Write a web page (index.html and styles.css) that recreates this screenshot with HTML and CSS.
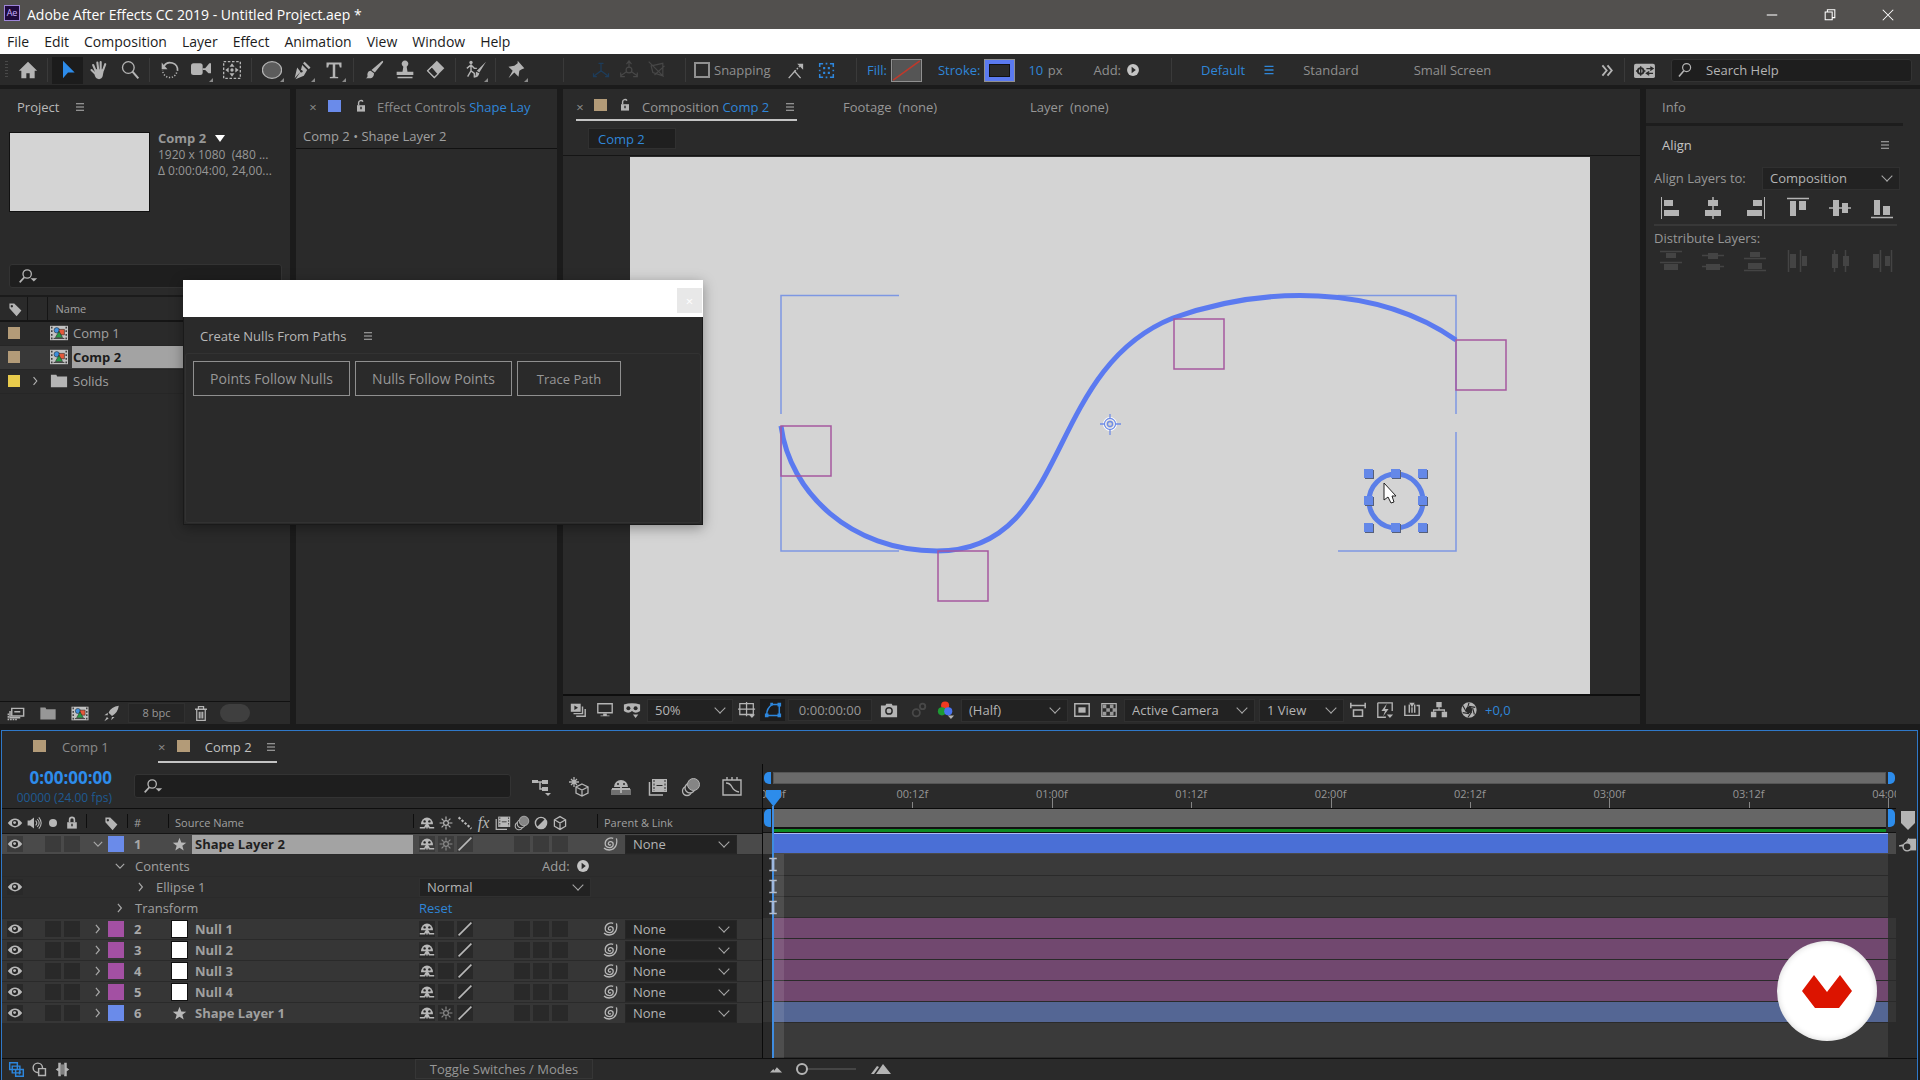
FILE: index.html
```html
<!DOCTYPE html>
<html lang="en">
<head>
<meta charset="utf-8">
<title>Adobe After Effects CC 2019 - Untitled Project.aep *</title>
<link rel="stylesheet" href="styles.css">
</head>
<body>
<svg class="defs" aria-hidden="true">
  <symbol id="menu" viewBox="0 0 20 20"><path d="M5 6h10M5 10h10M5 14h10" stroke="currentColor" stroke-width="1.4"/></symbol>
  <symbol id="lock-open" viewBox="0 0 20 20"><path d="M5 9h10v8H5z" fill="currentColor"/><path d="M7 9V6a3 3 0 0 1 5.500-1.500" fill="none" stroke="currentColor" stroke-width="1.800"/><path d="M10 11v3" stroke="#2a2a2a" stroke-width="1.800"/></symbol>
  <symbol id="lock" viewBox="0 0 20 20"><path d="M4 9h12v8H4z" fill="currentColor"/><path d="M7 9V6a3 3 0 0 1 6 0v3" fill="none" stroke="currentColor" stroke-width="2"/><path d="M10 11v3" stroke="#2a2a2a" stroke-width="1.800"/></symbol>
  <symbol id="search" viewBox="0 0 20 20"><circle cx="12" cy="7" r="5" fill="none" stroke="currentColor" stroke-width="1.500"/><path d="M8.500 11 2.500 18" stroke="currentColor" stroke-width="2"/></symbol>
  <symbol id="search-drop" viewBox="0 0 24 20"><circle cx="11" cy="7" r="5" fill="none" stroke="currentColor" stroke-width="1.600"/><path d="M7.500 11 2 17" stroke="currentColor" stroke-width="2"/><path d="M15 12h8l-4 4z" fill="currentColor"/></symbol>
  <symbol id="tag" viewBox="0 0 20 20"><path fill-rule="evenodd" d="M3 3h6l9 9-6 7-9-10zM6 5a1.500 1.500 0 1 0 .1 0z" fill="currentColor"/></symbol>
  <symbol id="folder" viewBox="0 0 20 20"><path d="M1 3h6l1 2h11v12H1z" fill="currentColor"/></symbol>
  <symbol id="comp" viewBox="0 0 20 20"><path d="M0 2h20v16H0z" fill="#c2c2c2"/><path d="M2 3v14M18 3v14" stroke="#2b2b2b" stroke-width="1.500" stroke-dasharray="2 2"/><path d="M4 16h12" stroke="#2b2b2b"/><circle cx="7.500" cy="7" r="3" fill="#3f8fdc" stroke="#222" stroke-width=".6"/><path d="M10 6h6v6h-6z" fill="#e5593b" stroke="#222" stroke-width=".6"/><path d="M10 8l4 7H6z" fill="#279a45" stroke="#222" stroke-width=".6"/></symbol>
  <symbol id="eye" viewBox="0 0 20 20"><path d="M1 10q9-11 18 0q-9 11-18 0z" fill="currentColor"/><circle cx="10" cy="10" r="3.800" fill="#242424"/><circle cx="9.500" cy="9.500" r="1.800" fill="currentColor"/></symbol>
  <symbol id="speaker" viewBox="0 0 20 20"><path d="M2 7h3l5-4v14l-5-4H2z" fill="currentColor"/><path d="M12 7q3 3 0 6M14 5q5 5 0 10M16 3q6 7 0 14" fill="none" stroke="currentColor" stroke-width="1.300"/></symbol>
  <symbol id="dot" viewBox="0 0 20 20"><circle cx="10" cy="10" r="5" fill="currentColor"/></symbol>
  <symbol id="twirl" viewBox="0 0 20 20"><path d="M7 4l5 6-5 6" fill="none" stroke="currentColor" stroke-width="1.700"/></symbol>
  <symbol id="twirl-down" viewBox="0 0 20 20"><path d="M4 7l6 6 6-6" fill="none" stroke="currentColor" stroke-width="1.700"/></symbol>
  <symbol id="star" viewBox="0 0 20 20"><path d="M10 1l2.400 6.200 6.600.3-5.200 4.100 1.800 6.400-5.600-3.600L4.400 18l1.800-6.400L1 7.500l6.600-.3z" fill="currentColor"/></symbol>
  <symbol id="shy" viewBox="0 0 20 20"><path d="M2.500 11.500a7.500 8.500 0 0 1 15 0z" fill="currentColor"/><circle cx="7" cy="8" r="1.500" fill="#242424"/><circle cx="13" cy="8" r="1.500" fill="#242424"/><path d="M10 11v6M1 16h6l2-4M19 16h-6l-2-4" fill="none" stroke="currentColor" stroke-width="2"/></symbol>
  <symbol id="sun" viewBox="0 0 20 20"><circle cx="10" cy="10" r="3" fill="none" stroke="currentColor" stroke-width="1.500"/><path d="M10 2v4M10 14v4M2 10h4M14 10h4M4.500 4.500 7 7M13 13l2.500 2.500M4.500 15.500 7 13M13 7l2.500-2.500" stroke="currentColor" stroke-width="1.400"/></symbol>
  <symbol id="quality" viewBox="0 0 20 20"><path d="M2 18 18 2" stroke="currentColor" stroke-width="2"/></symbol>
  <symbol id="quality-head" viewBox="0 0 20 20"><path d="M2 3 18 17" stroke="currentColor" stroke-width="2.600" stroke-dasharray="3 2"/></symbol>
  <symbol id="film" viewBox="0 0 20 20"><path d="M4 2h15v13H4z" fill="currentColor"/><path d="M1.500 5v13H15" fill="none" stroke="currentColor" stroke-width="1.500"/><path d="M6 3v11M17 3v11" stroke="#2a2a2a" stroke-dasharray="2 1.500"/><path d="M8.500 8.500h6" stroke="#2a2a2a"/></symbol>
  <symbol id="blur" viewBox="0 0 20 20"><circle cx="6" cy="14" r="4.500" fill="none" stroke="currentColor" stroke-width="1.300"/><circle cx="9" cy="11" r="5" fill="#2a2a2a" stroke="currentColor" stroke-width="1.300"/><circle cx="12.500" cy="7.500" r="6" fill="#858585" stroke="currentColor"/></symbol>
  <symbol id="adjust" viewBox="0 0 20 20"><circle cx="10" cy="10" r="7" fill="none" stroke="currentColor" stroke-width="1.800"/><path d="M15 5A7 7 0 0 1 5 15z" fill="currentColor"/></symbol>
  <symbol id="cube" viewBox="0 0 20 20"><path d="M10 2l7 4v8l-7 4-7-4V6zM3 6l7 4 7-4M10 10v8" fill="none" stroke="currentColor" stroke-width="1.600"/></symbol>
  <symbol id="spiral" viewBox="0 0 20 20"><path d="M11 10.500c-1 1.500-3.500.5-3-1.500.7-3 6-2.500 6 1.500 0 5.500-10 5.500-10-1C4 3 11 1.500 14 3M18 3c1.500 6-.5 14-9 14.500-3 0-5-1-6.500-2.500" fill="none" stroke="currentColor" stroke-width="1.600"/></symbol>
  <symbol id="play" viewBox="0 0 20 20"><circle cx="10" cy="10" r="8.500" fill="currentColor"/><path d="M8 5.500l6 4.500-6 4.500z" fill="#2a2a2a"/></symbol>
  <symbol id="ibeam" viewBox="0 0 10 16"><path d="M1 1.500h8M1 14.500h8" stroke="#b9c0cc" stroke-width="1.600"/><path d="M5 2v12" stroke="#9db8e0" stroke-width="3"/></symbol>
</svg>

<header class="titlebar">
  <span class="app-logo">Ae</span>
  <span class="app-title">Adobe After Effects CC 2019 - Untitled Project.aep *</span>
  <div class="window-buttons">
    <button aria-label="Minimize"><svg viewBox="0 0 16 16"><path d="M2 8h12" stroke="#fff" stroke-width="1.200"/></svg></button>
    <button aria-label="Restore"><svg viewBox="0 0 16 16"><path d="M2.500 4.500h8v9h-8zM5 4V2h8.500v9H11" fill="none" stroke="#fff" stroke-width="1.200"/></svg></button>
    <button aria-label="Close"><svg viewBox="0 0 16 16"><path d="M2 2l12 12M14 2 2 14" stroke="#fff" stroke-width="1.200"/></svg></button>
  </div>
</header>

<nav class="menubar">
  <button>File</button><button>Edit</button><button>Composition</button><button>Layer</button><button>Effect</button><button>Animation</button><button>View</button><button>Window</button><button>Help</button>
</nav>

<div class="toolbar">
  <span class="grip"></span>
  <button class="tool" aria-label="Home"><svg viewBox="0 0 24 24"><path d="M12 2 1 13h3v9h6v-6h4v6h6v-9h3z" fill="currentColor"/></svg></button>
  <span class="sep"></span>
  <button class="tool active" aria-label="Selection"><svg viewBox="0 0 24 24"><path d="M6 1l14 14h-8l-6 7z" fill="currentColor"/></svg></button>
  <button class="tool" aria-label="Hand"><svg viewBox="0 0 24 24"><path d="M8 13 5 6M11 11 10 3M14 11V2.500M17 12l2.500-7M9 18l-6-6" stroke="currentColor" stroke-width="2.500" stroke-linecap="round"/><path d="M7 11h11l-1.500 8q-1 4-4.500 4t-5-4z" fill="currentColor"/></svg></button>
  <button class="tool" aria-label="Zoom"><svg viewBox="0 0 24 24"><circle cx="10" cy="9" r="7" fill="none" stroke="currentColor" stroke-width="1.600"/><path d="M15 14l7 8" stroke="currentColor" stroke-width="2.500"/></svg></button>
  <span class="sep"></span>
  <button class="tool" aria-label="Rotation"><svg viewBox="0 0 24 24"><path d="M5 7c4-7 17-4 16 6" fill="none" stroke="currentColor" stroke-width="2"/><path d="M20 15c-3 9-16 8-17-3" fill="none" stroke="currentColor" stroke-width="1.800" stroke-dasharray="1.500 2"/><path d="M2 3v8h7z" fill="currentColor"/></svg></button>
  <button class="tool more" aria-label="Camera"><svg viewBox="0 0 24 24"><rect x="0" y="4" width="14" height="14" rx="3" fill="currentColor"/><path d="M14 10h3l5-6h2v12h-3l-4-4h-3z" fill="currentColor"/></svg></button>
  <button class="tool" aria-label="Pan Behind"><svg viewBox="0 0 24 24"><path d="M2 2h20v20H2z" fill="none" stroke="currentColor" stroke-width="1.600" stroke-dasharray="3 2"/><path d="M12 4l3 4H9zM12 20l3-4H9zM4 12l4-3v6zM20 12l-4-3v6z" fill="currentColor"/><circle cx="12" cy="12" r="2" fill="currentColor"/></svg></button>
  <span class="sep"></span>
  <button class="tool more" aria-label="Ellipse"><svg viewBox="0 0 24 24"><ellipse cx="12" cy="12" rx="11.500" ry="10" fill="#5c5c5c" stroke="currentColor" stroke-width="1.500"/></svg></button>
  <button class="tool more" aria-label="Pen"><svg viewBox="0 0 24 24"><path d="M14 2l7 7-2 2-7-7zM11 6l6 6-4 7-10 4 6-9M9 14l-7 8 3-13z" fill="currentColor"/><circle cx="10" cy="13.500" r="1.500" fill="#2a2a2a"/></svg></button>
  <button class="tool more" aria-label="Type"><svg viewBox="0 0 24 24"><path d="M3 3h18v6h-2l-1-3.500h-4.500V20l3.500.5V22H7v-1.500l3.500-.5V5.500H6L5 9H3z" fill="currentColor"/></svg></button>
  <span class="sep"></span>
  <button class="tool" aria-label="Brush"><svg viewBox="0 0 24 24"><path d="M22 1q2 1 0 3l-9 11-4-3zM8 13l4 3q0 5-4 6H2q3-1 2-5 1-4 4-4z" fill="currentColor"/></svg></button>
  <button class="tool" aria-label="Clone Stamp"><svg viewBox="0 0 24 24"><path d="M10 8a4 4 0 1 1 4 0l1 6h7v4H2v-4h7zM3 20h18v2H3z" fill="currentColor"/></svg></button>
  <button class="tool" aria-label="Eraser"><svg viewBox="0 0 24 24"><path d="M13 1l9 9-12 12-9-9z" fill="currentColor"/><path d="M7 9l7 8-4 4-8-8z" fill="#2a2a2a"/><path d="M7 8 2 13l8 8 5-5" fill="none" stroke="currentColor" stroke-width="1.500"/></svg></button>
  <span class="sep"></span>
  <button class="tool more" aria-label="Roto Brush"><svg viewBox="0 0 24 24"><circle cx="6" cy="3" r="2" fill="currentColor"/><path d="M1 10l5-4 4 4h3M6 6v7l-4 7M6 13l4 3v5" fill="none" stroke="currentColor" stroke-width="1.700"/><path d="M24 2l-8 13-3-2zM12 14l4 2q-1 5-6 5 2-2 2-7z" fill="currentColor"/></svg></button>
  <span class="sep"></span>
  <button class="tool more" aria-label="Puppet Pin"><svg viewBox="0 0 24 24"><path d="M14 1l8 9-3 1-3 2-1 7-5-5-7 7 5-9-5-5 7-1 4-3z" fill="currentColor"/></svg></button>
  <span class="sep sep-wide"></span>
  <button class="axis" aria-label="Local Axis Mode" disabled><svg viewBox="0 0 24 24"><path d="M12 4v9l-8 6M12 13l8 6M9 4h6M3 16v4h4M21 16v4h-4" fill="none" stroke="#1d3c5a" stroke-width="1.500"/></svg></button>
  <button class="axis" aria-label="World Axis Mode" disabled><svg viewBox="0 0 24 24"><circle cx="12" cy="12" r="3.500" fill="none" stroke="#474747" stroke-width="1.400"/><path d="M12 9V2M9 14l-7 5M15 14l7 5M9 5l3-4 3 4M2 15v5h5M22 15v5h-5" fill="none" stroke="#474747" stroke-width="1.400"/></svg></button>
  <button class="axis" aria-label="View Axis Mode" disabled><svg viewBox="0 0 24 24"><path d="M5 7l14-3v15L7 15zM2 2l18 18M9 18l12-11" fill="none" stroke="#474747" stroke-width="1.400"/></svg></button>
  <span class="sep sep-snap"></span>
  <label class="snapping"><input type="checkbox">Snapping</label>
  <button class="mini" aria-label="Snap to edges"><svg viewBox="0 0 20 20"><path d="M2 19l7-8 7 8" fill="none" stroke="#b4b4b4" stroke-width="1.600"/><path d="M9 11l6-6" stroke="#b4b4b4" stroke-width="1.600" stroke-dasharray="2 1.500"/><path d="M12 2h7v7z" fill="#b4b4b4"/></svg></button>
  <button class="mini" aria-label="Snap to features"><svg viewBox="0 0 20 20"><path d="M2 6V2h4M14 2h4v4M18 14v4h-4M6 18H2v-4" fill="none" stroke="#2d86dc" stroke-width="1.800"/><path d="M6 6h2.500v2.500H6zM11.500 6H14v2.500h-2.500zM6 11.500h2.500V14H6zM11.500 11.500H14V14h-2.500zM9 1h2v2H9zM9 17h2v2H9zM1 9h2v2H1zM17 9h2v2h-2z" fill="#2d86dc"/></svg></button>
  <span class="sep sep-fill"></span>
  <button class="blue">Fill:</button>
  <button class="swatch" aria-label="Fill colour"><svg viewBox="0 0 30 22"><path d="M0 0h30v22H0z" fill="#555"/><path d="M1 21 29 1" stroke="#c0392b" stroke-width="1.600"/></svg></button>
  <button class="blue stroke-label">Stroke:</button>
  <button class="swatch swatch-stroke" aria-label="Stroke colour"><span></span></button>
  <span class="stroke-width"><span class="blue">10</span> px</span>
  <button class="add">Add:<svg><use href="#play"/></svg></button>
  <span class="sep sep-ws"></span>
  <div class="workspaces">
    <button class="blue">Default</button><svg class="blue"><use href="#menu"/></svg>
    <button>Standard</button><button class="ws-small">Small Screen</button>
  </div>
  <button class="mini ws-more" aria-label="More workspaces"><svg viewBox="0 0 20 20"><path d="M4 4l5 6-5 6M10 4l5 6-5 6" fill="none" stroke="#b4b4b4" stroke-width="2.200"/></svg></button>
  <span class="sep"></span>
  <button class="mini sync" aria-label="Sync settings"><svg viewBox="0 0 24 20"><rect x="1" y="3" width="22" height="15" rx="2" fill="#b4b4b4"/><circle cx="8" cy="10.500" r="3" fill="none" stroke="#2a2a2a" stroke-width="2"/><path d="M8 5.500v10M3 10.500h2M11 10.500h2M14 8h6M15 13h6M18 6l3 2-3 2M17 11l-3 2 3 2" fill="none" stroke="#2a2a2a" stroke-width="1.400"/></svg></button>
  <label class="help-search"><svg><use href="#search"/></svg><input type="text" placeholder="Search Help" aria-label="Search Help"></label>
</div>

<main class="workspace">
  <section class="panel project">
    <div class="tabs"><span class="light">Project</span><svg class="ic"><use href="#menu"/></svg></div>
    <div class="item-info">
      <div class="thumb"></div>
      <div class="item-text"><strong>Comp 2 <i class="tri"></i></strong><span>1920 x 1080&nbsp; (480 ...</span><span>Δ 0:00:04:00, 24,00...</span></div>
    </div>
    <label class="searchbox"><svg><use href="#search-drop"/></svg><input type="text" aria-label="Search project"></label>
    <table class="items">
      <thead><tr><th class="c-label"><svg class="ic"><use href="#tag"/></svg></th><th class="c-gap"></th><th class="c-item">Name</th></tr></thead>
      <tbody>
        <tr><td><i class="chip sand"></i></td><td></td><td><span class="item"><svg><use href="#comp"/></svg><span>Comp 1</span></span></td></tr>
        <tr class="selected"><td><i class="chip sand"></i></td><td></td><td><span class="item"><svg><use href="#comp"/></svg><span>Comp 2</span></span></td></tr>
        <tr><td><i class="chip yellow"></i></td><td><svg class="ic tw"><use href="#twirl"/></svg></td><td><span class="item"><svg><use href="#folder"/></svg><span>Solids</span></span></td></tr>
      </tbody>
    </table>
    <footer class="project-foot">
      <button aria-label="Interpret Footage"><svg viewBox="0 0 20 20"><path d="M5 4h14v9H5z" fill="none" stroke="#b4b4b4" stroke-width="1.700"/><path d="M8 8h7M3 7v8h12" stroke="#b4b4b4" stroke-width="1.800" fill="none"/><path d="M1 10v7h11" fill="none" stroke="#b4b4b4" stroke-width="1.800" stroke-dasharray="2 1"/></svg></button>
      <button aria-label="New Folder"><svg><use href="#folder"/></svg></button>
      <button aria-label="New Composition"><svg><use href="#comp"/></svg></button>
      <button aria-label="Project Settings"><svg viewBox="0 0 20 20"><path d="M18 1Q9 2 6 9l4 4q7-4 8-12zM5 9l-4 3h4zM10 14l-1 4 4-4zM4 14l-3 5 5-3z" fill="#b4b4b4"/></svg></button>
      <button class="bpc">8 bpc</button>
      <button aria-label="Delete"><svg viewBox="0 0 20 20"><path d="M3 5h14M7 5V2h6v3M5 5v13h10V5M8 8v8M10 8v8M12 8v8" fill="none" stroke="#b4b4b4" stroke-width="1.500"/></svg></button>
      <span class="pill"></span>
    </footer>
  </section>

  <section class="panel effects">
    <div class="tabs"><button class="x">×</button><i class="chip blue-chip"></i><svg class="ic"><use href="#lock-open"/></svg><span class="fx-title">Effect Controls <span class="blue">Shape Lay</span></span></div>
    <p class="fx-path">Comp 2 • Shape Layer 2</p>
  </section>

  <section class="panel comp">
    <div class="tabs comp-tabs">
      <div class="tab current"><button class="x">×</button><i class="chip sand"></i><svg class="ic"><use href="#lock-open"/></svg><span>Composition <span class="blue">Comp 2</span></span><svg class="ic end"><use href="#menu"/></svg></div>
      <button class="tab-footage">Footage&nbsp; (none)</button><button class="tab-layer">Layer&nbsp; (none)</button>
    </div>
    <div class="crumbs"><button class="blue">Comp 2</button></div>
    <div class="viewer">
      <svg class="canvas" viewBox="0 0 960 537">
        <g fill="none" stroke="#7d97e2" stroke-width="1.500">
          <path d="M151 257V138.500H269M151 275V394H269M708 138.500H826V257M708 394H826V275"/>
        </g>
        <path d="M151 269C160 336 221 394 307 394C441 394 413 213 543 161C633 129 746 127 826 183" fill="none" stroke="#5b7af0" stroke-width="5"/>
        <g fill="none" stroke="#a5589f" stroke-width="1.500"><path d="M151 269h50v50h-50zM308 394h50v50h-50zM544 162h50v50h-50zM826 183h50v50h-50z"/></g>
        <g fill="none" stroke="#6f8ce6" stroke-width="1.300"><circle cx="480" cy="267" r="5.500" stroke="#fff" stroke-width="3"/><circle cx="480" cy="267" r="5.500"/><circle cx="480" cy="267" r="2.500"/><path d="M480 257v5M480 272v6M470 267h5M485 267h6"/></g>
        <circle cx="766" cy="344" r="27" fill="none" stroke="#5b7fe8" stroke-width="5"/>
        <path transform="translate(1 1)" d="M734 312h9v9h-9zM761 312h9v9h-9zM788 312h9v9h-9zM734 339h9v9h-9zM788 339h9v9h-9zM734 366h9v9h-9zM761 366h9v9h-9zM788 366h9v9h-9z" fill="#555f7a"/>
        <path d="M734 312h9v9h-9zM761 312h9v9h-9zM788 312h9v9h-9zM734 339h9v9h-9zM788 339h9v9h-9zM734 366h9v9h-9zM761 366h9v9h-9zM788 366h9v9h-9z" fill="#6488e8"/>
        <path d="M754 326v17l4-3 3 6 3-1-2-6h4z" fill="#fff" stroke="#222"/>
      </svg>
    </div>
    <footer class="comp-foot">
      <button class="fi" aria-label="Always Preview"><svg viewBox="0 0 20 20"><path d="M2 3h11v9H2z" fill="#b4b4b4"/><path d="M6 5l4 2.500L6 10z" fill="#2a2a2a"/><path d="M15 6v8H5M18 9v8H8" fill="none" stroke="#b4b4b4" stroke-width="1.600"/></svg></button>
      <button class="fi" aria-label="Primary Viewer"><svg viewBox="0 0 20 20"><path d="M2 3h16v10H2z" fill="none" stroke="#b4b4b4" stroke-width="1.500"/><path d="M8 14h4v2h3v1H5v-1h3z" fill="#b4b4b4"/></svg></button>
      <button class="fi" aria-label="VR view"><svg viewBox="0 0 20 20"><path d="M1 4q9-3 18 0v7q-5 4-9 0-4 4-9 0z" fill="#b4b4b4"/><circle cx="6" cy="8" r="2.200" fill="#2a2a2a"/><circle cx="14" cy="8" r="2.200" fill="#2a2a2a"/><path d="M11 15h6l-3 4z" fill="#b4b4b4"/></svg></button>
      <span class="select s-zoom"><select aria-label="Magnification"><option>50%</option></select></span>
      <button class="fi" aria-label="Grid and guides"><svg viewBox="0 0 20 20"><path d="M2 3h15v12H2zM9.500 1v16M0 9h19" fill="none" stroke="#b4b4b4" stroke-width="1.400"/><path d="M12 15h7l-3.500 4z" fill="#b4b4b4"/></svg></button>
      <button class="fi on" aria-label="Mask visibility"><svg viewBox="0 0 20 20"><path d="M3 15q0-7 6-11h8v12H3" fill="none" stroke="#2d86dc" stroke-width="1.700"/><path d="M1 14h4v4H1zM7 2h3v3H7zM15 2h4v4h-4zM15 14h4v4h-4z" fill="#2d86dc"/></svg></button>
      <button class="time-box">0:00:00:00</button>
      <button class="fi cam" aria-label="Take Snapshot"><svg viewBox="0 0 20 20"><path d="M1 5h5l1-2h6l1 2h5v13H1z" fill="#b4b4b4"/><circle cx="10" cy="11" r="3.500" fill="none" stroke="#2a2a2a" stroke-width="1.600"/></svg></button>
      <button class="fi" aria-label="Show Snapshot" disabled><svg viewBox="0 0 20 20"><circle cx="7" cy="13" r="4" fill="none" stroke="#484848" stroke-width="2"/><circle cx="14" cy="6" r="3" fill="none" stroke="#484848" stroke-width="2"/></svg></button>
      <button class="fi" aria-label="Channels"><svg viewBox="0 0 20 20"><circle cx="9" cy="5" r="4.500" fill="#f03a22"/><circle cx="5.500" cy="11.500" r="4.500" fill="#1d9a35"/><circle cx="12.500" cy="11.500" r="4.500" fill="#4a74f0"/><path d="M12 16h7l-3.500 4z" fill="#b4b4b4"/></svg></button>
      <span class="select s-res"><select aria-label="Resolution"><option>(Half)</option></select></span>
      <button class="fi" aria-label="Region of Interest"><svg viewBox="0 0 20 20"><path d="M2 3h16v14H2z" fill="none" stroke="#b4b4b4" stroke-width="1.600"/><path d="M6 7h8v6H6z" fill="#b4b4b4"/></svg></button>
      <button class="fi" aria-label="Transparency Grid"><svg viewBox="0 0 20 20"><path d="M2 3h16v14H2z" fill="none" stroke="#b4b4b4" stroke-width="1.300"/><path d="M3 4h4v4H3zM11 4h4v4h-4zM7 8h4v4H7zM14 8h4v4h-4zM3 12h4v4H3zM11 12h4v4h-4z" fill="#999"/></svg></button>
      <span class="select s-cam"><select aria-label="3D View"><option>Active Camera</option></select></span>
      <span class="select s-view"><select aria-label="View Layout"><option>1 View</option></select></span>
      <button class="fi" aria-label="Pixel Aspect"><svg viewBox="0 0 20 20"><path d="M5 10h10v7H5zM2 5h16M2 2v6M18 2v6" fill="none" stroke="#b4b4b4" stroke-width="1.700"/></svg></button>
      <button class="fi" aria-label="Fast Previews"><svg viewBox="0 0 20 20"><path d="M2 2h16v9M2 2v16h9" fill="none" stroke="#b4b4b4" stroke-width="1.500"/><path d="M12 3l-6 8h4l-2 6 6-8h-4zM12 15h7l-3.500 4z" fill="#b4b4b4"/></svg></button>
      <button class="fi" aria-label="Timeline"><svg viewBox="0 0 20 20"><path d="M2 5v11h16V5h-3M7 4v9M13 4v9M10 7v6" fill="none" stroke="#b4b4b4" stroke-width="1.600"/><path d="M7 2h6l-3 5z" fill="#b4b4b4"/></svg></button>
      <button class="fi" aria-label="Flowchart"><svg viewBox="0 0 20 20"><path d="M7 1h6v6H7zM1 12h6v6H1zM13 12h6v6h-6z" fill="#b4b4b4"/><path d="M10 7v3M4 12v-2h12v2" fill="none" stroke="#b4b4b4" stroke-width="1.400"/></svg></button>
      <button class="fi shutter" aria-label="Reset Exposure"><svg viewBox="0 0 20 20"><circle cx="10" cy="10" r="6" fill="none" stroke="#b4b4b4" stroke-width="5"/><path d="M10 2 8 9M17 7l-7-1M16 15l-2-7M9 18l4-6M3 13l7 1M3 5l4 7" stroke="#2a2a2a" stroke-width="1.300"/></svg></button>
      <span class="blue exposure">+0,0</span>
    </footer>
  </section>

  <section class="panel side">
    <div class="tabs info">Info</div>
    <div class="align-head"><span>Align</span><svg class="ic"><use href="#menu"/></svg></div>
    <label class="align-to"><span>Align Layers to:</span><span class="select"><select><option>Composition</option></select></span></label>
    <div class="align-row">
      <button aria-label="Align left"><svg viewBox="0 0 22 22"><path d="M1.500 0v22" stroke="currentColor"/><path d="M4 3h9v6H4zM4 13h15v6H4z" fill="currentColor"/></svg></button>
      <button aria-label="Align centre"><svg viewBox="0 0 22 22"><path d="M11 0v22" stroke="currentColor" stroke-width="1.500"/><path d="M6 3h10v6H6zM3 13h16v6H3z" fill="currentColor"/></svg></button>
      <button aria-label="Align right"><svg viewBox="0 0 22 22"><path d="M20.500 0v22" stroke="currentColor"/><path d="M9 3h9v6H9zM3 13h15v6H3z" fill="currentColor"/></svg></button>
      <button aria-label="Align top"><svg viewBox="0 0 22 22"><path d="M0 1.500h22" stroke="currentColor" stroke-width="1.500"/><path d="M3 4h6v15H3zM12 4h7v9h-7z" fill="currentColor"/></svg></button>
      <button aria-label="Align middle"><svg viewBox="0 0 22 22"><path d="M0 11h22" stroke="currentColor" stroke-width="1.500"/><path d="M4 3h6v16H4zM13 6h6v10h-6z" fill="currentColor"/></svg></button>
      <button aria-label="Align bottom"><svg viewBox="0 0 22 22"><path d="M0 20.500h22" stroke="currentColor" stroke-width="1.500"/><path d="M3 3h6v15H3zM12 9h7v9h-7z" fill="currentColor"/></svg></button>
    </div>
    <p class="distribute">Distribute Layers:</p>
    <div class="align-row off">
      <button disabled aria-label="Distribute top"><svg viewBox="0 0 22 22"><path d="M0 1.500h22M0 12.500h22" stroke="currentColor" stroke-width="1.500"/><path d="M6 3h10v5H6zM4 14h14v6H4z" fill="currentColor"/></svg></button>
      <button disabled aria-label="Distribute vertical centre"><svg viewBox="0 0 22 22"><path d="M0 5.500h22M0 16.500h22" stroke="currentColor" stroke-width="1.500"/><path d="M6 3h10v6H6zM4 14h14v6H4z" fill="currentColor"/></svg></button>
      <button disabled aria-label="Distribute bottom"><svg viewBox="0 0 22 22"><path d="M0 8.500h22M0 20.500h22" stroke="currentColor" stroke-width="1.500"/><path d="M6 2h10v5H6zM4 13h14v6H4z" fill="currentColor"/></svg></button>
      <button disabled aria-label="Distribute left"><svg viewBox="0 0 22 22"><path d="M1.500 0v22M13.500 0v22" stroke="currentColor" stroke-width="1.500"/><path d="M3 4h6v14H3zM15 6h5v10h-5z" fill="currentColor"/></svg></button>
      <button disabled aria-label="Distribute horizontal centre"><svg viewBox="0 0 22 22"><path d="M5.500 0v22M16.500 0v22" stroke="currentColor" stroke-width="1.500"/><path d="M3 4h6v14H3zM14 6h6v10h-6z" fill="currentColor"/></svg></button>
      <button disabled aria-label="Distribute right"><svg viewBox="0 0 22 22"><path d="M9.500 0v22M20.500 0v22" stroke="currentColor" stroke-width="1.500"/><path d="M2 4h6v14H2zM14 6h5v10h-5z" fill="currentColor"/></svg></button>
    </div>
  </section>
</main>

<section class="timeline">
  <div class="tl-tabs">
    <button class="tl-tab first"><i class="chip sand"></i>Comp 1</button>
    <div class="tl-tab current"><button class="x">×</button><i class="chip sand"></i><span>Comp 2</span><svg class="ic end"><use href="#menu"/></svg></div>
  </div>
  <div class="tl-body">
    <div class="tl-left">
      <div class="tl-controls">
        <div class="timecode"><strong>0:00:00:00</strong><span>00000 (24.00 fps)</span></div>
        <label class="searchbox"><svg><use href="#search-drop"/></svg><input type="text" aria-label="Search layers"></label>
        <div class="tl-icons">
          <button aria-label="Mini-Flowchart"><svg viewBox="0 0 20 20"><path d="M1 3h6v3H1zM11 3h6v4h-6zM11 10h6v4h-6z" fill="currentColor"/><path d="M6 5h5M9 5v7h3" stroke="currentColor" stroke-width="1.500" fill="none"/><path d="M14 16h6l-3 3z" fill="currentColor"/></svg></button>
          <button aria-label="Draft 3D" class="g1"><svg viewBox="0 0 20 20"><path d="M13 7l6 3v6l-6 3-6-3v-6zM7 10l6 3 6-3M13 13v6M5 0v10M0 5h10M2 2l6 6M8 2 2 8" fill="none" stroke="currentColor" stroke-width="1.300"/></svg></button>
          <button aria-label="Hide Shy" class="g1"><svg viewBox="0 0 20 20"><path d="M0 12h20v6H0z" fill="#707070"/><path d="M3 10a7 7 0 0 1 14 0z" fill="currentColor"/><circle cx="7" cy="7" r="1" fill="#2a2a2a"/><circle cx="13" cy="7" r="1" fill="#2a2a2a"/><path d="M10 8v8M1 12h18" stroke="currentColor" stroke-width="1.800"/></svg></button>
          <button aria-label="Frame Blending"><svg><use href="#film"/></svg></button>
          <button aria-label="Motion Blur"><svg><use href="#blur"/></svg></button>
          <button aria-label="Graph Editor" class="g2"><svg viewBox="0 0 20 20"><path d="M1 3h18v15H1zM5 0v3M10 0v3M15 0v3M4 6q4 0 6 4t7 5" fill="none" stroke="currentColor" stroke-width="1.400"/></svg></button>
        </div>
      </div>
      <table class="layers">
        <colgroup><col class="k-av"><col class="k-label"><col class="k-num"><col><col class="k-sw"><col class="k-par"></colgroup>
        <thead><tr>
          <th><span class="av"><svg><use href="#eye"/></svg><svg><use href="#speaker"/></svg><svg><use href="#dot"/></svg><svg><use href="#lock"/></svg></span></th>
          <th class="tagcell"><svg class="ic"><use href="#tag"/></svg></th><th class="numcell">#</th><th class="srccell">Source Name</th>
          <th><span class="sw"><svg><use href="#shy"/></svg><svg><use href="#sun"/></svg><svg><use href="#quality-head"/></svg><em>fx</em><svg><use href="#film"/></svg><svg><use href="#blur"/></svg><svg><use href="#adjust"/></svg><svg><use href="#cube"/></svg></span></th>
          <th class="parhead">Parent &amp; Link</th>
        </tr></thead>
        <tbody>
          <tr class="layer selected">
            <td><span class="av"><b><svg><use href="#eye"/></svg></b><i></i><b></b><b></b></span></td>
            <td><span class="lab"><svg><use href="#twirl-down"/></svg><i class="chip blue-chip"></i></span></td><td class="num">1</td>
            <td><span class="name"><svg><use href="#star"/></svg><span>Shape Layer 2</span></span></td>
            <td><span class="sw"><b><svg><use href="#shy"/></svg></b><b><svg class="dim"><use href="#sun"/></svg></b><b><svg><use href="#quality"/></svg></b><i></i><i></i><b></b><b></b><b></b></span></td>
            <td><span class="par"><svg><use href="#spiral"/></svg><span class="select"><select aria-label="Parent of Shape Layer 2"><option>None</option></select></span></span></td>
          </tr>
          <tr class="prop tall"><td></td><td colspan="3"><span class="pr d1"><svg><use href="#twirl-down"/></svg>Contents</span></td><td colspan="2"><button class="add tl-add">Add:<svg><use href="#play"/></svg></button></td></tr>
          <tr class="prop"><td><span class="av"><b><svg><use href="#eye"/></svg></b></span></td><td colspan="3"><span class="pr d2"><svg><use href="#twirl"/></svg>Ellipse 1</span></td><td colspan="2"><span class="select s-mode"><select aria-label="Blend mode"><option>Normal</option></select></span></td></tr>
          <tr class="prop"><td></td><td colspan="3"><span class="pr d1"><svg><use href="#twirl"/></svg>Transform</span></td><td colspan="2"><button class="blue reset">Reset</button></td></tr>
          <tr class="layer"><td><span class="av"><b><svg><use href="#eye"/></svg></b><i></i><b></b><b></b></span></td><td><span class="lab"><svg><use href="#twirl"/></svg><i class="chip purple"></i></span></td><td class="num">2</td><td><span class="name"><i class="null"></i><span>Null 1</span></span></td><td><span class="sw"><b><svg><use href="#shy"/></svg></b><b></b><b><svg><use href="#quality"/></svg></b><i></i><i></i><b></b><b></b><b></b></span></td><td><span class="par"><svg><use href="#spiral"/></svg><span class="select"><select aria-label="Parent of Null 1"><option>None</option></select></span></span></td></tr>
          <tr class="layer"><td><span class="av"><b><svg><use href="#eye"/></svg></b><i></i><b></b><b></b></span></td><td><span class="lab"><svg><use href="#twirl"/></svg><i class="chip purple"></i></span></td><td class="num">3</td><td><span class="name"><i class="null"></i><span>Null 2</span></span></td><td><span class="sw"><b><svg><use href="#shy"/></svg></b><b></b><b><svg><use href="#quality"/></svg></b><i></i><i></i><b></b><b></b><b></b></span></td><td><span class="par"><svg><use href="#spiral"/></svg><span class="select"><select aria-label="Parent of Null 2"><option>None</option></select></span></span></td></tr>
          <tr class="layer"><td><span class="av"><b><svg><use href="#eye"/></svg></b><i></i><b></b><b></b></span></td><td><span class="lab"><svg><use href="#twirl"/></svg><i class="chip purple"></i></span></td><td class="num">4</td><td><span class="name"><i class="null"></i><span>Null 3</span></span></td><td><span class="sw"><b><svg><use href="#shy"/></svg></b><b></b><b><svg><use href="#quality"/></svg></b><i></i><i></i><b></b><b></b><b></b></span></td><td><span class="par"><svg><use href="#spiral"/></svg><span class="select"><select aria-label="Parent of Null 3"><option>None</option></select></span></span></td></tr>
          <tr class="layer"><td><span class="av"><b><svg><use href="#eye"/></svg></b><i></i><b></b><b></b></span></td><td><span class="lab"><svg><use href="#twirl"/></svg><i class="chip purple"></i></span></td><td class="num">5</td><td><span class="name"><i class="null"></i><span>Null 4</span></span></td><td><span class="sw"><b><svg><use href="#shy"/></svg></b><b></b><b><svg><use href="#quality"/></svg></b><i></i><i></i><b></b><b></b><b></b></span></td><td><span class="par"><svg><use href="#spiral"/></svg><span class="select"><select aria-label="Parent of Null 4"><option>None</option></select></span></span></td></tr>
          <tr class="layer"><td><span class="av"><b><svg><use href="#eye"/></svg></b><i></i><b></b><b></b></span></td><td><span class="lab"><svg><use href="#twirl"/></svg><i class="chip blue-chip"></i></span></td><td class="num">6</td><td><span class="name"><svg><use href="#star"/></svg><span>Shape Layer 1</span></span></td><td><span class="sw"><b><svg><use href="#shy"/></svg></b><b><svg class="dim"><use href="#sun"/></svg></b><b><svg><use href="#quality"/></svg></b><i></i><i></i><b></b><b></b><b></b></span></td><td><span class="par"><svg><use href="#spiral"/></svg><span class="select"><select aria-label="Parent of Shape Layer 1"><option>None</option></select></span></span></td></tr>
        </tbody>
      </table>
    </div>
    <div class="tl-right">
      <div class="nav-bar"><span class="cap"></span><span class="span"></span><span class="cap right"></span></div>
      <div class="ruler">
        <span class="major">0:00f</span><span>00:12f</span><span class="major">01:00f</span><span>01:12f</span><span class="major">02:00f</span><span>02:12f</span><span class="major">03:00f</span><span>03:12f</span><span class="major">04:00f</span>
      </div>
      <div class="work-bar"><span class="cap"></span><span class="span"></span><span class="cap right"></span></div>
      <div class="tracks">
        <div class="track lay sel"><span class="bar bright"></span></div>
        <div class="track tall"><span class="bar"><svg><use href="#ibeam"/></svg></span></div>
        <div class="track"><span class="bar"><svg><use href="#ibeam"/></svg></span></div>
        <div class="track"><span class="bar"><svg><use href="#ibeam"/></svg></span></div>
        <div class="track lay"><span class="bar plum"></span></div>
        <div class="track lay"><span class="bar plum"></span></div>
        <div class="track lay"><span class="bar plum"></span></div>
        <div class="track lay"><span class="bar plum"></span></div>
        <div class="track lay"><span class="bar steel"></span></div>
        <div class="track rest"><span class="bar"></span></div>
        <div class="frame-now"></div>
      </div>
      <div class="playhead"><svg viewBox="0 0 15 16"><path d="M0 0h15v7l-7 9h-1L0 7z" fill="#2d8ceb"/></svg></div>
    </div>
    <div class="tl-edge">
      <svg viewBox="0 0 16 20"><path d="M1 1h14v12l-7 7-7-7z" fill="#b4b4b4"/></svg>
      <svg viewBox="0 0 20 20"><path d="M10 3h9v13h-9z" fill="#b4b4b4"/><path d="M0 11h6l5-8M0 11l5-1" fill="none" stroke="#b4b4b4" stroke-width="1.500"/><circle cx="9" cy="12" r="4.500" fill="#2a2a2a" stroke="#b4b4b4" stroke-width="1.600"/></svg>
    </div>
  </div>
  <footer class="tl-foot">
    <div class="panes">
      <button aria-label="Layer Switches"><svg viewBox="0 0 20 20"><path d="M2 2h9v8H2zM5 6h9v8H5zM9 10h9v8H9zM13.500 12v4M11.500 14h4" fill="#2a2a2a" stroke="#2d86dc" stroke-width="1.700"/></svg></button>
      <button aria-label="Transfer Controls"><svg viewBox="0 0 20 20"><circle cx="8" cy="8" r="5.500" fill="none" stroke="#b4b4b4" stroke-width="1.700"/><path d="M9 9h8v8H9z" fill="#2a2a2a" stroke="#b4b4b4" stroke-width="1.700"/></svg></button>
      <button aria-label="In and Out"><svg viewBox="0 0 20 20"><path d="M8 2H5v6l-3 2 3 2v6h3zM12 2h3v6l3 2-3 2v6h-3z" fill="#b4b4b4"/><path d="M8 4h4v12H8z" fill="#808080"/></svg></button>
    </div>
    <button class="toggle">Toggle Switches / Modes</button>
    <div class="zoomer">
      <svg viewBox="0 0 16 16"><path d="M1 12l4-4 1 2 3-4 6 6z" fill="#b4b4b4"/></svg>
      <input type="range" min="0" max="100" value="0" aria-label="Timeline zoom">
      <svg class="big" viewBox="0 0 22 16"><path d="M1 13l6-8 2 1-5 7zM6 13l7-10 8 10z" fill="#b4b4b4"/></svg>
    </div>
  </footer>
</section>

<aside class="float-window">
  <div class="fw-bar"><button aria-label="Close">×</button></div>
  <div class="fw-head"><span>Create Nulls From Paths</span><svg class="ic"><use href="#menu"/></svg></div>
  <div class="fw-body"><button>Points Follow Nulls</button><button>Nulls Follow Points</button><button class="trace">Trace Path</button></div>
</aside>
<div class="badge"><svg viewBox="0 0 100 100"><path d="M37 34l13 17 13-17 12 16-13 17H38L25 50z" fill="#dc1400"/></svg></div>
</body>
</html>
```
FILE: styles.css
```css
* { box-sizing: border-box; }
body {
  margin: 0;
  min-height: 100vh;
  display: flex;
  flex-direction: column;
  overflow: hidden;
  position: relative;
  background: #1b1b1b;
  color: #979797;
  font: 13px/16px "Open Sans", "Noto Sans", sans-serif;
}
button, select, input { font: inherit; color: inherit; background: none; border: 0; padding: 0; margin: 0; border-radius: 0; }
button { white-space: nowrap; }
input:focus { outline: none; }
svg { display: block; flex: none; }
p { margin: 0; }
.defs { position: absolute; width: 0; height: 0; }
.blue { color: #2f86d8; }
.light { color: #b8b8b8; }
.ic { width: 16px; height: 16px; color: #b4b4b4; }
.chip { display: block; flex: none; width: 13px; height: 12px; }
.sand { background: #b39b78; }
.yellow { background: #e8cb4c; }
.blue-chip { background: #6a8bea; }
.purple { background: #a350a3; }
.x { font-size: 13px; width: 8px; color: #8c8c8c; }

.select { display: inline-grid; align-items: center; background: #222; border: 1px solid #303030; color: #b4b4b4; }
.select select, .select::after { grid-area: 1 / 1; }
.select select { appearance: none; width: 100%; padding: 0 20px 0 7px; color: #b4b4b4; outline: none; }
.select::after { content: ""; justify-self: end; width: 7px; height: 7px; margin: 0 8px 4px 0; border: solid #a8a8a8; border-width: 0 1px 1px 0; transform: rotate(45deg); pointer-events: none; }

/* Title and menus */
.titlebar { height: 29px; display: flex; align-items: center; background: #52504e; color: #fff; font-size: 14px; }
.app-logo { width: 16px; height: 16px; margin: 0 7px 3px 4px; background: #1f0a3c; border: 1px solid #9d84d8; color: #c9b0ff; font: 9px/13px "Open Sans", sans-serif; text-align: center; }
.window-buttons { margin-left: auto; display: flex; }
.window-buttons button { width: 58px; display: grid; place-items: center; }
.window-buttons svg { width: 14px; height: 14px; }
.window-buttons button:last-child { margin-right: 3px; }
.menubar { height: 25px; display: flex; align-items: center; gap: 15px; padding-left: 7px; background: #fff; color: #1c1c1c; font-size: 14px; }

/* Toolbar */
.toolbar { height: 31px; margin-bottom: 4px; padding-top: 1px; display: flex; align-items: center; background: #2a2a2a; color: #8f8f8f; }
.grip { width: 3px; height: 18px; margin: 0 4px 0 5px; background: repeating-linear-gradient(#484848 0 1px, #2a2a2a 1px 3px); }
.tool { position: relative; width: 31px; height: 27px; display: grid; place-items: center; color: #b4b4b4; }
.tool svg { width: 20px; height: 20px; }
.tool.active { background: #1c1c1c; color: #2d8ceb; }
.tool.more::after { content: ""; position: absolute; right: 3px; bottom: 2px; border: solid transparent; border-width: 2px; border-right-color: #8a8a8a; border-bottom-color: #8a8a8a; }
.sep { flex: none; width: 1px; height: 24px; margin: 0 4px; background: #3a3a3a; }
.sep-wide { margin: 0 23px 0 32px; }
.axis { width: 28px; height: 25px; display: grid; place-items: center; }
.axis svg { width: 20px; height: 20px; }
.sep-snap { margin: 0 8px 0 14px; }
.snapping { display: flex; align-items: center; gap: 4px; width: 86px; }
.snapping input { appearance: none; width: 16px; height: 16px; border: 2px solid #909090; }
.mini { width: 31px; display: grid; place-items: center; }
.mini svg { width: 17px; height: 17px; }
.sep-fill { margin: 0 10px 0 14px; }
.swatch { width: 31px; height: 23px; margin-left: 4px; border: 1px solid #909090; overflow: hidden; }
.swatch svg { width: 29px; height: 21px; }
.stroke-label { margin-left: 16px; }
.swatch-stroke { padding: 4px; background: #5b7af0; }
.swatch-stroke span { display: block; height: 13px; background: #2a2a2a; border: 1px solid #111; }
.stroke-width { margin-left: 13px; white-space: nowrap; }
.stroke-width .blue { margin-right: 1px; }
.add { display: flex; align-items: center; gap: 5px; }
.add svg { width: 14px; height: 14px; color: #c4c4c4; }
.toolbar .add { margin-left: 31px; }
.sep-ws { margin: 0 29px 0 31px; }
.workspaces { flex: 1; display: flex; align-items: center; }
.workspaces svg { width: 18px; height: 18px; margin: 0 25px 0 15px; }
.ws-small { margin-left: 55px; }
.ws-more { width: 26px; }
.sync { width: 30px; }
.sync svg { width: 23px; height: 19px; }
.help-search { width: 241px; height: 23px; margin: 0 8px 0 12px; padding: 0 5px; display: flex; align-items: center; gap: 13px; background: #1e1e1e; border: 1px solid #333; border-radius: 3px; color: #b4b4b4; }
.help-search svg { width: 16px; height: 16px; }
.help-search input { flex: 1; min-width: 0; }
.help-search input::placeholder { color: #b4b4b4; opacity: 1; }

/* Upper panels */
.workspace { flex: 1; min-height: 635px; display: grid; grid-template-columns: 290px 261px 1fr 274px; column-gap: 6px; margin-bottom: 6px; }
.panel { background: #2a2a2a; min-width: 0; display: flex; flex-direction: column; }
.tabs { flex: none; height: 36px; display: flex; align-items: center; }
.project .tabs { padding-left: 17px; gap: 13px; }
.item-info { height: 132px; padding: 7px 0 0 9px; display: flex; gap: 8px; }
.thumb { width: 141px; height: 80px; background: #d4d4d4; border: 1px solid #111; }
.item-text { display: flex; flex-direction: column; font-size: 12px; white-space: nowrap; }
.item-text strong { font-size: 13px; display: flex; align-items: center; gap: 9px; margin: -2px 0 1px; }
.tri { border: 5px solid transparent; border-top: 7px solid #fff; border-bottom: 0; }
.searchbox { height: 24px; display: flex; align-items: center; background: #1e1e1e; border: 1px solid #333; border-radius: 3px; color: #b4b4b4; }
.searchbox svg { width: 20px; height: 17px; margin-left: 8px; }
.searchbox input { flex: 1; min-width: 0; }
.project .searchbox { flex: none; margin: 7px 8px 7px 9px; }
.items { width: 100%; border-collapse: collapse; table-layout: fixed; color: #a0a0a0; border-top: 2px solid #1b1b1b; }
.items th { height: 25px; padding: 0; font-size: 11px; font-weight: 400; text-align: left; border-bottom: 2px solid #151515; }
.items .c-label { width: 27px; padding-left: 7px; }
.items .c-gap { width: 20px; border-left: 1px solid #151515; }
.items .c-item { padding-left: 8px; border-left: 1px solid #151515; }
.items td { height: 24px; padding: 0; border-bottom: 1px solid #262626; }
.items .chip { margin-left: 8px; width: 12px; }
.items .tw { width: 13px; margin-left: 2px; }
.item { display: flex; align-items: center; gap: 3px; }
.item svg { width: 20px; height: 18px; color: #b4b4b4; margin-left: 2px; }
.item > span { flex: 1; line-height: 22px; padding-left: 1px; }
.items .selected { background: #383838; }
.items .selected .item > span { background: #a3a3a3; color: #1c1c1c; font-weight: 700; }
.project-foot { margin-top: auto; height: 23px; display: flex; align-items: center; border-top: 1px solid #111; }
.project-foot button { width: 32px; display: grid; place-items: center; }
.project-foot svg { width: 20px; height: 17px; }
.project-foot .bpc { width: 57px; height: 20px; background: #262626; border: 1px solid #303030; font-size: 11px; }
.pill { width: 30px; height: 18px; margin-left: 3px; border-radius: 9px; background: #3f3f3f; }

.effects .tabs { padding-left: 13px; color: #8a8a8a; }
.effects .chip { margin: 0 12px 3px 11px; }
.effects .ic { margin: 0 8px 3px 0; }
.fx-title { white-space: nowrap; }
.fx-path { padding: 3px 7px 4px; border-bottom: 1px solid #111; color: #a0a0a0; }

.comp-tabs { padding-left: 13px; }
.tab { display: flex; align-items: center; align-self: flex-start; height: 32px; padding-top: 5px; width: 221px; border-bottom: 2px solid #c4c4c4; white-space: nowrap; }
.tab .chip { margin: 0 10px 3px 10px; }
.tab .ic { margin: 0 9px 3px 0; }
.tab .ic.end { margin: 0 -1px 0 auto; }
.tab-footage { margin-left: 46px; }
.tab-layer { margin-left: 93px; }
.crumbs { height: 31px; border-bottom: 1px solid #151515; padding: 3px 0 0 25px; }
.crumbs button { width: 88px; height: 21px; padding-left: 9px; text-align: left; background: #1f1f1f; border: 1px solid #303030; }
.viewer { flex: 1; min-height: 0; display: flex; justify-content: center; padding: 1px 0 0 16px; }
.canvas { width: 960px; height: 537px; max-width: 100%; background: #d4d4d4; }
.comp-foot { height: 30px; border-top: 2px solid #0e0e0e; display: flex; align-items: center; padding-left: 1px; white-space: nowrap; }
.fi { width: 27px; height: 22px; display: grid; place-items: center; }
.fi svg { width: 18px; height: 18px; }
.fi.on { background: #1c1c1c; margin-right: 3px; width: 25px; }
.fi.cam { width: 33px; }
.shutter { margin-left: 3px; }
.comp-foot .select { height: 23px; }
.s-zoom { width: 86px; margin-left: 2px; }
.s-res { width: 107px; margin-left: 2px; }
.s-cam { width: 131px; margin-left: 2px; }
.s-view { width: 85px; margin: 0 0 0 4px; }
.time-box { width: 84px; height: 22px; background: #242424; border: 1px solid #303030; }
.exposure { margin-left: 3px; }

.side { padding-right: 17px; }
.side .info { height: 37px; border-bottom: 3px solid #1d1d1d; }
.align-head { height: 36px; display: flex; align-items: center; justify-content: space-between; color: #c4c4c4; }
.side .info, .align-head { padding: 2px 10px 0 16px; }
.align-to { display: flex; align-items: center; justify-content: space-between; height: 32px; padding: 0 3px 0 8px; }
.align-to .select { width: 138px; height: 23px; }
.align-row { display: grid; grid-template-columns: repeat(6, 1fr); padding: 0 0 0 4px; height: 28px; color: #b4b4b4; }
.align-row button { display: grid; place-items: center; }
.align-row svg { width: 22px; height: 22px; }
.align-row.off { color: #444; }
.distribute { margin: 2px 6px 0 8px; padding: 4px 0 1px; border-top: 2px solid #383838; }

/* Timeline */
.timeline { height: 350px; flex: none; display: flex; flex-direction: column; margin: 0 2px 0 1px; background: #2a2a2a; border: 1px solid #2f78c8; border-bottom: 0; }
.tl-tabs { height: 33px; display: flex; align-items: flex-start; }
.tl-tab { display: flex; align-items: center; height: 32px; }
.tl-tab.first { margin: 0 49px 0 31px; gap: 16px; color: #8a8a8a; }
.tl-tab.current { width: 119px; padding-top: 2px; border-bottom: 2px solid #c4c4c4; color: #c0c0c0; }
.tl-tab .chip { margin-bottom: 2px; }
.tl-tab.current .chip { margin: 0 15px 2px 11px; }
.tl-tab .end { margin: 0 -2px 0 auto; }
.tl-body { flex: 1; display: grid; grid-template-columns: 760px 1fr 21px; min-height: 0; }
.tl-controls { height: 44px; display: flex; padding-top: 3px; }
.timecode { width: 132px; padding-right: 22px; text-align: right; display: flex; flex-direction: column; color: #1f5a92; font-size: 12px; line-height: 18px; white-space: nowrap; }
.timecode strong { color: #2d8ceb; font-size: 17px; line-height: 22px; font-weight: 700; }
.tl-controls .searchbox { width: 377px; margin-top: 7px; }
.tl-icons { display: flex; align-items: flex-start; padding: 10px 0 0 13px; color: #b4b4b4; }
.tl-icons button { width: 33px; display: grid; place-items: center; }
.tl-icons svg { width: 20px; height: 20px; }
.tl-icons .g1 { width: 43px; }
.tl-icons .g1 + .g1 { width: 41px; }
.tl-icons .g2 { width: 50px; }

.layers { width: 100%; border-collapse: collapse; table-layout: fixed; }
.k-av { width: 84px; }
.k-label, .k-num { width: 41px; }
.k-sw { width: 184px; }
.k-par { width: 165px; }
.layers th { height: 25px; padding: 3px 0 0; border-top: 1px solid #0e0e0e; border-bottom: 1px solid #151515; font-size: 11px; font-weight: 400; text-align: left; color: #a0a0a0; }
.layers th + th { background: linear-gradient(#0e0e0e, #0e0e0e) left center / 1px 14px no-repeat; }
.layers td { height: 21px; padding: 0; border-bottom: 1px solid #2a2a2a; }
.layers .tall td { height: 22px; }
.layers .tagcell { padding-left: 17px; }
.layers .numcell { padding-left: 7px; }
.layers .srccell, .layers .parhead { padding-left: 7px; }
.layers .layer { background: #363636; }
.layers .selected { background: #4a4a4a; }
.layers .prop { background: #2d2d2d; color: #a0a0a0; }
.av, .sw { display: grid; grid-auto-flow: column; grid-auto-columns: 19px; align-items: center; justify-items: center; height: 20px; color: #b8b8b8; }
.av { padding-left: 3px; }
.sw { padding-left: 4px; }
.av svg, .sw svg { width: 16px; height: 16px; }
.av b, .sw b { width: 16px; height: 16px; background: #292929; display: grid; place-items: center; }
.selected .av b, .selected .sw b { background: #3b3b3b; }
.sw .dim { color: #8a8a8a; }
.sw em { font: italic 16px/16px "Liberation Serif", serif; }
.lab { display: flex; align-items: center; padding-left: 5px; gap: 3px; }
.lab svg { width: 14px; height: 14px; color: #a8a8a8; }
.lab .chip { width: 16px; height: 16px; }
.num { font-weight: 700; color: #a8a8a8; }
.layers .num { padding-left: 7px; }
.name { display: flex; align-items: center; gap: 5px; padding-left: 4px; font-weight: 700; color: #a0a0a0; }
.name svg { width: 15px; height: 15px; color: #b8b8b8; }
.null { width: 15px; height: 16px; background: #fff; outline: 1px solid #111; }
.name > span { flex: 1; line-height: 19px; padding-left: 3px; }
.selected .name > span { background: #a3a3a3; color: #1f1f1f; }
.par { display: flex; align-items: center; padding-left: 5px; gap: 7px; }
.par svg { width: 16px; height: 16px; color: #b8b8b8; }
.par .select { width: 112px; height: 19px; border-color: #262626; }
.pr { display: flex; align-items: center; gap: 8px; }
.pr svg { width: 14px; height: 14px; color: #a8a8a8; }
.d1 { padding-left: 27px; }
.d2 { padding-left: 48px; }
.s-mode { display: grid; width: 172px; height: 19px; margin-left: 6px; }
.tl-add { margin-left: 129px; gap: 6px; }
.reset { display: block; margin-left: 6px; }

.tl-right { position: relative; border-left: 1px solid #0a0a0a; display: flex; flex-direction: column; min-width: 0; padding-top: 8px; overflow: hidden; }
.nav-bar, .work-bar { display: flex; gap: 2px; padding: 0 1px; }
.nav-bar { height: 12px; }
.work-bar { height: 25px; border-top: 1px solid #0a0a0a; border-bottom: 1px solid #111; }
.cap { width: 7px; background: #2d8ceb; border-radius: 5px 0 0 5px; }
.cap.right { border-radius: 0 5px 5px 0; }
.nav-bar .span { flex: 1; background: #6a6a6a; border: 1px solid #555; }
.work-bar .span { flex: 1; background: #666; border-bottom: 3px solid #0d8a22; box-shadow: inset 0 -2px #111; }
.work-bar .cap { height: 18px; }
.ruler { height: 24px; display: flex; justify-content: space-between; padding: 2px 8px 0 10px; font-size: 11px; color: #969696; white-space: nowrap; }
.ruler span { position: relative; width: 0; display: flex; justify-content: center; }
.ruler span::before { content: ""; position: absolute; left: 0; bottom: 0; width: 1px; height: 6px; background: #858585; }
.ruler .major::before { height: 10px; }
.tracks { flex: 1; display: flex; flex-direction: column; position: relative; }
.track { height: 21px; flex: none; display: flex; padding: 0 8px 1px 10px; }
.track.tall { height: 22px; }
.track.lay { background: linear-gradient(#353535, #353535) 0 0 / 100% 20px no-repeat; }
.track.sel { background: #4a4a4a; }
.track.rest { flex: 1; height: auto; }
.bar { flex: 1; background: #3a3a3a; }
.bar svg { position: relative; z-index: 2; width: 10px; height: 15px; margin: 3px 0 0 -5px; }
.bright { background: #4a6fd6; border-top: 1px solid #a9bcf4; }
.plum { background: #71486f; }
.steel { background: #546694; }
.frame-now { position: absolute; left: 10px; top: 21px; bottom: 0; width: 11px; background: rgba(255, 255, 255, .1); }
.playhead { position: absolute; left: 2px; top: 26px; bottom: 0; width: 16px; display: flex; flex-direction: column; align-items: center; }
.playhead svg { width: 15px; height: 16px; }
.playhead::after { content: ""; flex: 1; width: 2px; background: #3f8ce0; }
.tl-edge { padding: 46px 0 0 2px; display: flex; flex-direction: column; gap: 5px; align-items: center; }
.tl-edge svg { width: 18px; height: 20px; }
.tl-foot { height: 22px; padding-bottom: 1px; display: flex; align-items: center; border-top: 1px solid #0e0e0e; }
.panes { width: 413px; display: flex; padding-left: 3px; }
.panes button { width: 23px; display: grid; place-items: center; }
.panes svg { width: 17px; height: 17px; }
.toggle { width: 178px; height: 20px; background: #2c2c2c; border: 1px solid #363636; text-align: center; }
.zoomer { display: flex; align-items: center; padding-left: 176px; }
.zoomer svg { width: 14px; height: 14px; }
.zoomer .big { width: 22px; height: 16px; }
.zoomer input { appearance: none; width: 60px; height: 12px; margin: 0 14px 0 13px; background: linear-gradient(#454545, #454545) center / 100% 2px no-repeat; }
.zoomer input::-webkit-slider-thumb { appearance: none; width: 12px; height: 12px; border-radius: 50%; background: #2a2a2a; border: 2px solid #b4b4b4; }

/* Floating script panel */
.float-window { position: absolute; left: 183px; top: 280px; width: 520px; height: 245px; display: flex; flex-direction: column; background: #2a2a2a; border: 1px solid #1a1a1a; border-top: 0; box-shadow: 0 3px 12px rgba(0, 0, 0, .35); }
.fw-bar { flex: none; height: 37px; margin: 0 -1px; background: #fff; display: flex; justify-content: flex-end; align-items: center; }
.fw-bar button { width: 25px; height: 25px; margin: 4px 1px 0 0; background: #e8e8e8; color: #fff; }
.fw-head { height: 36px; display: flex; align-items: center; gap: 14px; padding: 1px 0 0 16px; color: #b8b8b8; }
.fw-body { flex: 1; display: flex; align-items: flex-start; gap: 5px; padding: 7px; margin: 0 1px 1px; border: 1px solid #323232; border-radius: 3px; }
.fw-body button { width: 157px; height: 35px; border: 1px solid #8f8f8f; font-size: 14px; }
.fw-body .trace { width: 104px; font-size: 13px; }

.badge { position: absolute; right: 43px; bottom: 39px; width: 100px; height: 100px; border-radius: 50%; background: #fff; box-shadow: inset 0 0 6px rgba(0, 0, 0, .18); }
```
